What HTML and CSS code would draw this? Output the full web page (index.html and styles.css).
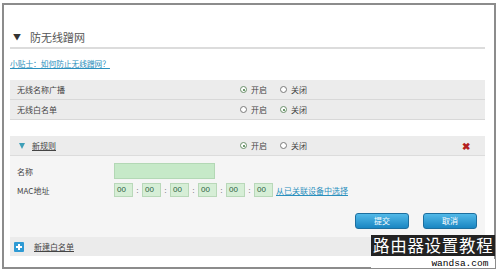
FILE: index.html
```html
<!DOCTYPE html>
<html>
<head>
<meta charset="utf-8">
<link rel="stylesheet" href="styles.css">
</head>
<body>
<div class="frame">
  <div class="title"><span class="tri">▼</span>防无线蹭网</div>
  <div class="sep"></div>
  <a class="tip" href="#">小贴士：如何防止无线蹭网？</a>
  <div class="rows">
    <div class="row">
      <span class="label">无线名称广播</span>
      <span class="opt"><i class="radio on"></i>开启</span>
      <span class="opt"><i class="radio"></i>关闭</span>
    </div>
    <div class="row">
      <span class="label">无线白名单</span>
      <span class="opt"><i class="radio"></i>开启</span>
      <span class="opt"><i class="radio on"></i>关闭</span>
    </div>
  </div>
  <div class="rule">
    <div class="row head">
      <span class="label"><span class="tri2"></span><a class="rname" href="#">新规则</a></span>
      <span class="opt"><i class="radio on"></i>开启</span>
      <span class="opt"><i class="radio"></i>关闭</span>
      <span class="del">✖</span>
    </div>
    <div class="body">
      <div class="field">
        <span class="flabel">名称</span>
        <span class="name-in"></span>
      </div>
      <div class="field mac">
        <span class="flabel">MAC地址</span>
        <span class="box">00</span><span class="colon">:</span>
        <span class="box">00</span><span class="colon">:</span>
        <span class="box">00</span><span class="colon">:</span>
        <span class="box">00</span><span class="colon">:</span>
        <span class="box">00</span><span class="colon">:</span>
        <span class="box">00</span>
        <a class="pick" href="#">从已关联设备中选择</a>
      </div>
      <div class="actions">
        <span class="btn">提交</span>
        <span class="btn">取消</span>
      </div>
    </div>
    <div class="add"><span class="plus"></span><a class="addtext" href="#">新建白名单</a></div>
  </div>
</div>
<div class="watermark">
  <div class="wm-cn">路由器设置教程</div>
  <div class="wm-en">wandsa.com</div>
</div>
</body>
</html>
```
FILE: styles.css
```css
* { box-sizing: border-box; }
html, body { margin: 0; padding: 0; background: #fff; }
body {
  width: 500px; height: 273px; position: relative; overflow: hidden;
  font-family: "Noto Sans CJK SC", "Noto Sans", sans-serif;
  font-size: 8px; color: #444;
}
.frame {
  margin: 3px 0 0 2px;
  width: 494px; height: 266px;
  border: 2px solid #8c8c8c;
  padding: 0 9px 0 6px;
}
.title {
  padding-top: 22px; height: 42px;
  font-size: 11px; line-height: 14px; color: #555;
  display: flex; align-items: center;
}
.tri { font-size: 8px; margin: 0 9px 0 3px; color: #333; }
.sep { height: 2px; background: #dcdcdc; }
.tip {
  display: block; margin-top: 10px; line-height: 10px; height: 10px;
  color: #2a8fbd; font-size: 7.7px; text-decoration: underline;
}
.rows { margin-top: 11px; }
.row {
  display: flex; align-items: center; height: 20px;
  background: #ececec; border-bottom: 1px solid #d8d8d8;
  padding-left: 7px; position: relative;
}
.row .label { width: 223px; display: flex; align-items: center; }
.opt { display: flex; align-items: center; width: 40px; color: #444; }
.radio {
  width: 7px; height: 7px; border-radius: 50%;
  border: 1px solid #7a7a7a; background: #fff; margin-right: 4px;
  position: relative;
}
.radio.on::after {
  content: ""; position: absolute; left: 1.5px; top: 1.5px;
  width: 2px; height: 2px; border-radius: 50%; background: #3f7a3f;
}
.radio.on { border-color: #6a8f6a; }
.rule { margin-top: 16px; }
.head { height: 20px; border-bottom: 1px solid #dcdcdc; }
.tri2 {
  width: 0; height: 0; margin: 0 7px 0 2px;
  border-left: 3.5px solid transparent; border-right: 3.5px solid transparent;
  border-top: 6px solid #3e9fb8;
}
.rname { color: #444; text-decoration: underline; }
.del {
  position: absolute; left: 452px; top: 4px;
  color: #b42020; font-size: 10px; line-height: 11px; font-weight: bold;
}
.body { background: #f5f5f5; height: 81px; padding-top: 7px; }
.field { display: flex; align-items: center; padding-left: 7px; }
.flabel { width: 97px; }
.name-in {
  width: 101px; height: 16px; background: #c6e9c8; border: 1px solid #b3d8b5;
}
.mac { margin-top: 4px; }
.box {
  width: 19px; height: 14px; background: #d6eed6; border: 1px solid #b9d8b9;
  color: #2d5e44; font-family: "Liberation Sans", sans-serif;
  font-size: 8px; line-height: 12px; padding-left: 2px;
}
.colon { width: 9px; text-align: center; color: #777; font-size: 7px; }
.pick { margin-left: 3px; color: #2a8fbd; text-decoration: underline; }
.actions {
  display: flex; justify-content: flex-end; gap: 14px;
  margin-top: 16px; padding-right: 8px;
}
.btn {
  width: 54px; height: 16px; border-radius: 3px;
  background: linear-gradient(#52b9e8, #1a86c2);
  border: 1px solid #1d6f9f; color: #fff; text-align: center; line-height: 14px;
}
.add {
  display: flex; align-items: center; height: 19px;
  background: #ebebeb; padding-left: 4px;
}
.plus {
  width: 10px; height: 10px; background: #2e9ad4; border-radius: 1px;
  position: relative; margin-right: 10px;
}
.plus::before { content: ""; position: absolute; left: 2px; top: 4px; width: 6px; height: 2px; background: #fff; }
.plus::after { content: ""; position: absolute; left: 4px; top: 2px; width: 2px; height: 6px; background: #fff; }
.addtext { color: #444; text-decoration: underline; }
.watermark { position: absolute; left: 371px; top: 235px; }
.wm-cn {
  background: #222; color: #fff; font-size: 16.5px; line-height: 21px;
  letter-spacing: 0.7px; padding: 0 2px;
}
.wm-en {
  background: #fff; color: #000; font-family: "Liberation Mono", monospace;
  font-size: 9.5px; line-height: 9px; margin-top: 3px; text-align: right; padding-right: 7px;
}
```
